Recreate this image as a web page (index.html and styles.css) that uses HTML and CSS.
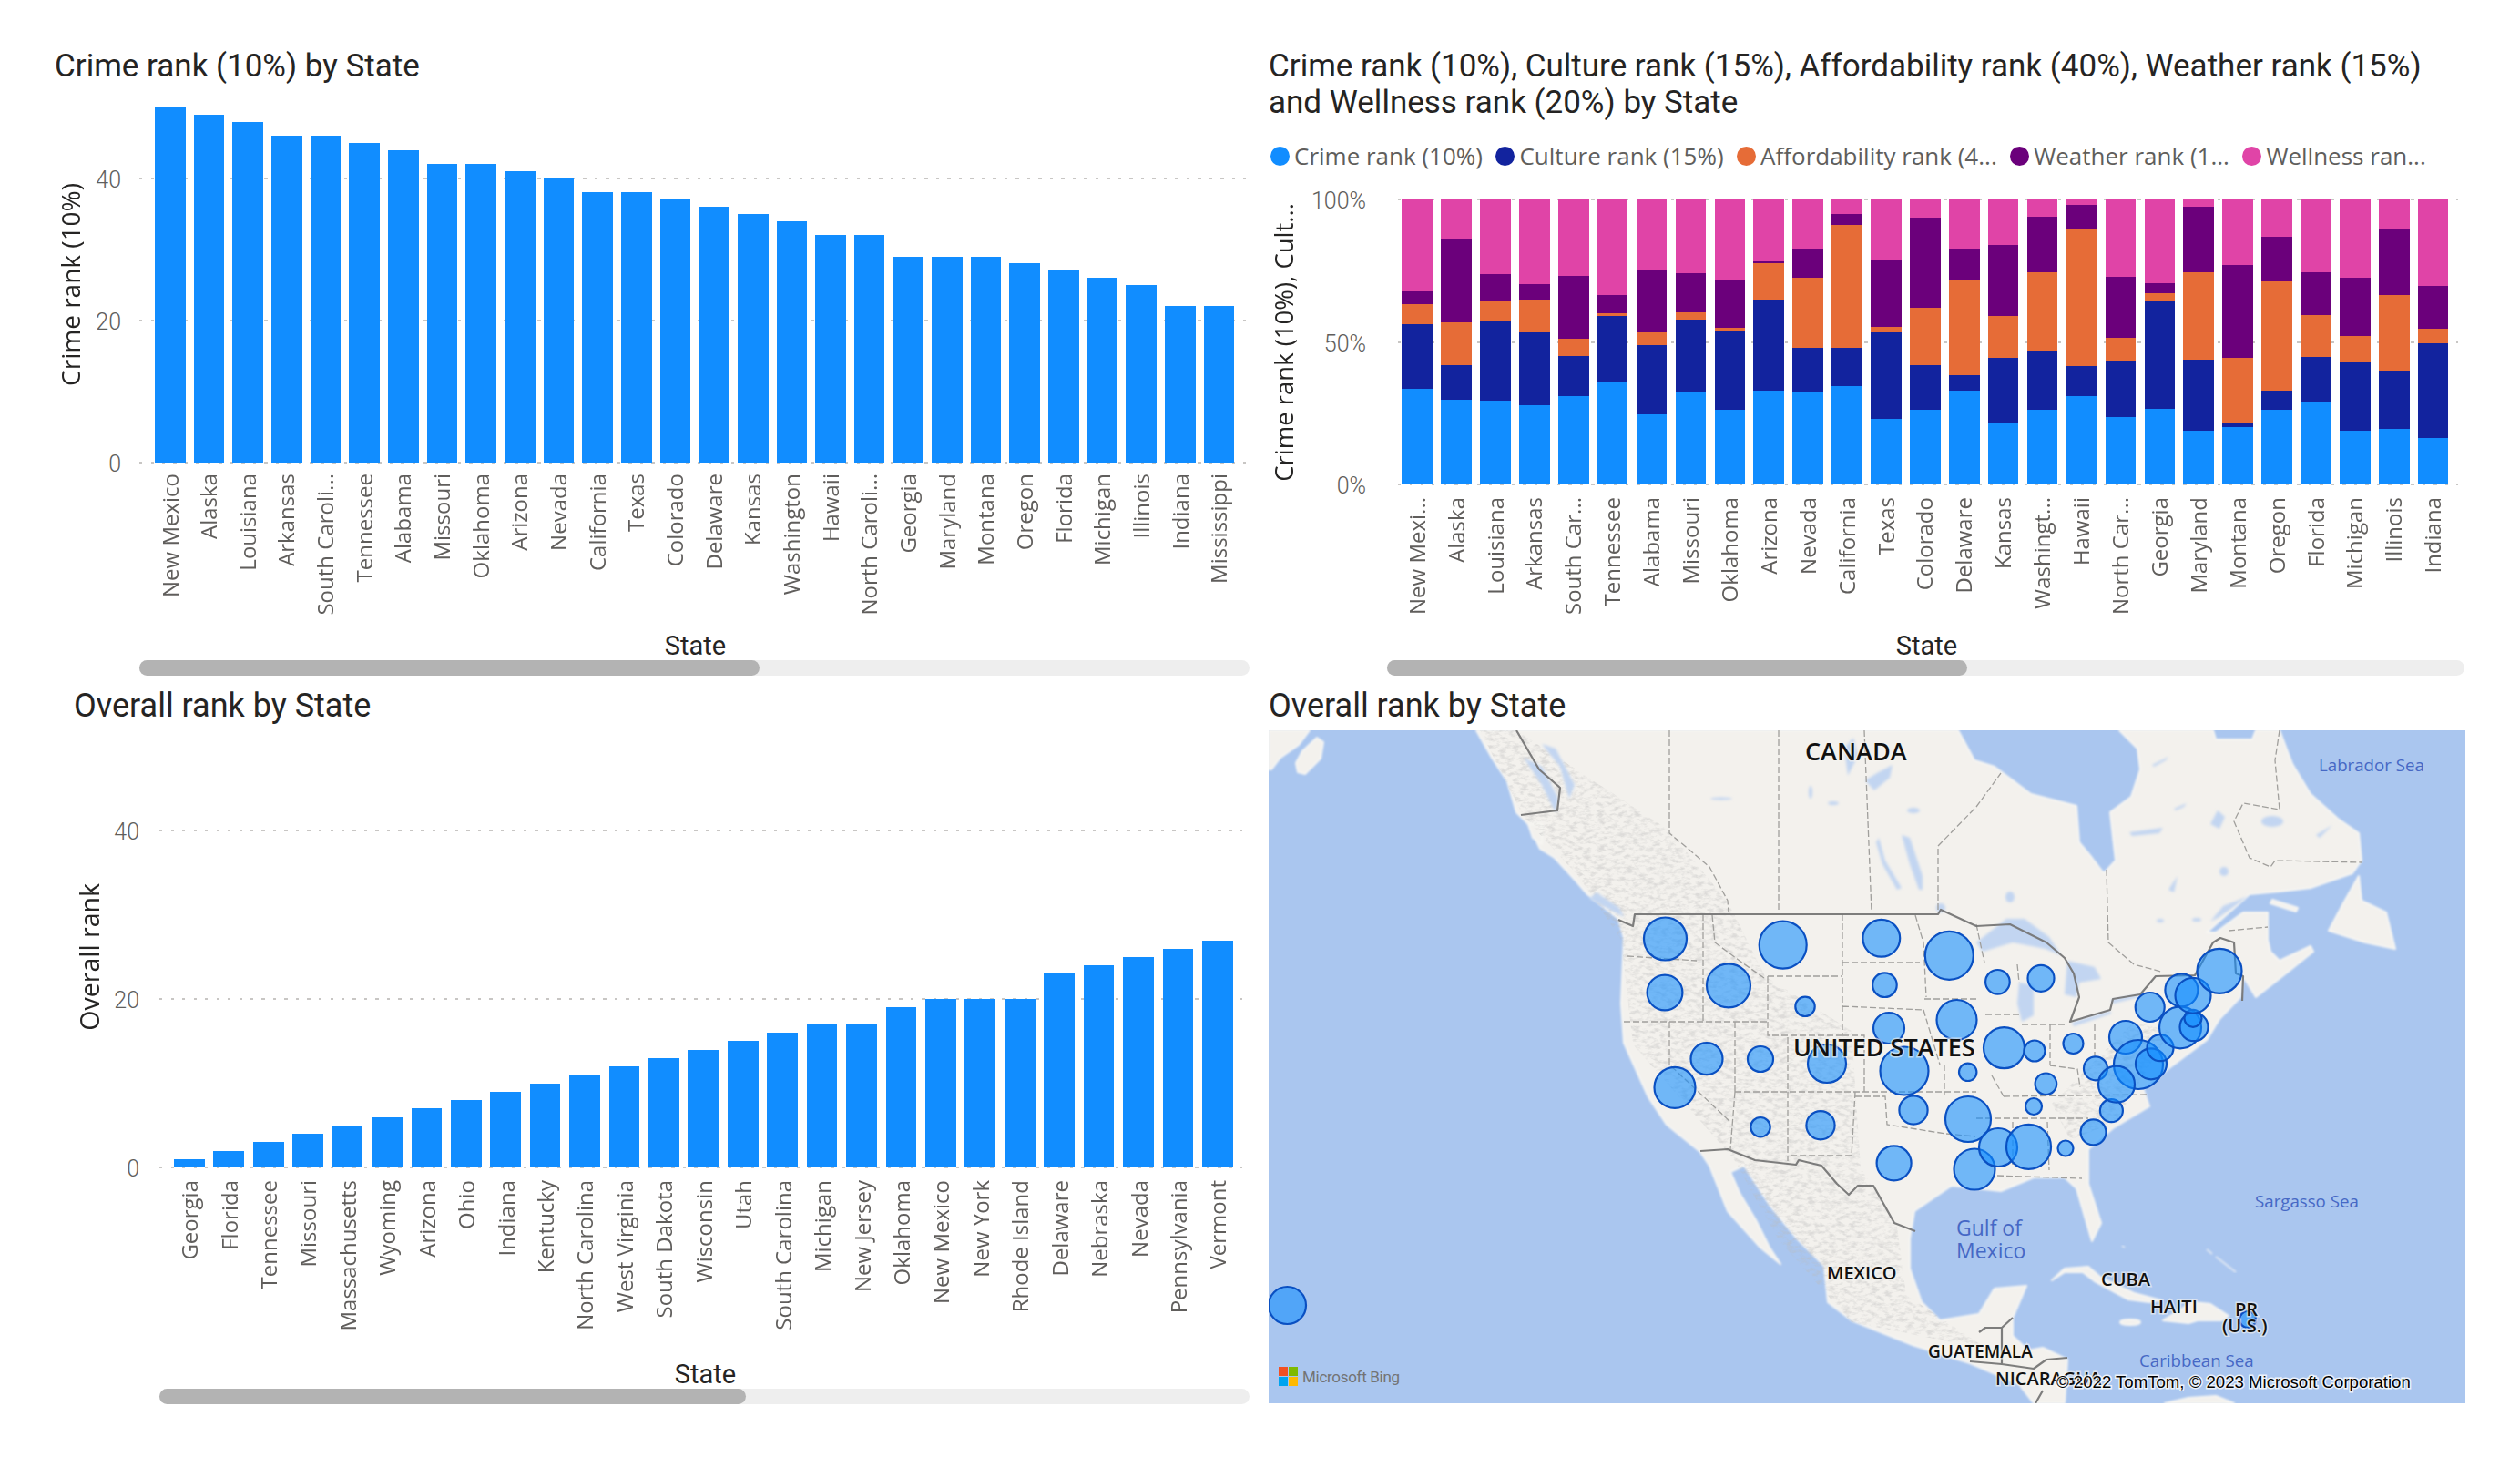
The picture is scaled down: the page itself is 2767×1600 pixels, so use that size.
FILE: index.html
```html
<!DOCTYPE html>
<html lang="en">
<head>
<meta charset="utf-8">
<title>Rank by State</title>
<link rel="stylesheet" href="styles.css">
</head>
<body>
<main class="report">

<section class="panel panel-crime">
  <h2 class="title">Crime rank (10%) by State</h2>
  <div class="plotrow">
    <div class="ytitle"><span>Crime rank (10%)</span></div>
    <div class="ticks"><span class="tick" style="bottom:80%">40</span><span class="tick" style="bottom:40%">20</span><span class="tick" style="bottom:0">0</span></div>
    <div class="plot">
      <i class="gridline" style="bottom:80%"></i><i class="gridline" style="bottom:40%"></i><i class="gridline" style="bottom:0"></i>
      <div class="bars">
        <b style="height:100%"></b><b style="height:98%"></b><b style="height:96%"></b><b style="height:92%"></b><b style="height:92%"></b><b style="height:90%"></b><b style="height:88%"></b><b style="height:84%"></b><b style="height:84%"></b><b style="height:82%"></b><b style="height:80%"></b><b style="height:76%"></b><b style="height:76%"></b><b style="height:74%"></b><b style="height:72%"></b><b style="height:70%"></b><b style="height:68%"></b><b style="height:64%"></b><b style="height:64%"></b><b style="height:58%"></b><b style="height:58%"></b><b style="height:58%"></b><b style="height:56%"></b><b style="height:54%"></b><b style="height:52%"></b><b style="height:50%"></b><b style="height:44%"></b><b style="height:44%"></b>
      </div>
    </div>
  </div>
  <div class="labels">
    <span>New Mexico</span><span>Alaska</span><span>Louisiana</span><span>Arkansas</span><span>South Caroli...</span><span>Tennessee</span><span>Alabama</span><span>Missouri</span><span>Oklahoma</span><span>Arizona</span><span>Nevada</span><span>California</span><span>Texas</span><span>Colorado</span><span>Delaware</span><span>Kansas</span><span>Washington</span><span>Hawaii</span><span>North Caroli...</span><span>Georgia</span><span>Maryland</span><span>Montana</span><span>Oregon</span><span>Florida</span><span>Michigan</span><span>Illinois</span><span>Indiana</span><span>Mississippi</span>
  </div>
  <div class="xtitle">State</div>
  <div class="scroll"><div class="thumb"></div></div>
</section>

<section class="panel panel-stack">
  <h2 class="title">Crime rank (10%), Culture rank (15%), Affordability rank (40%), Weather rank (15%)<br>and Wellness rank (20%) by State</h2>
  <ul class="legend">
    <li><i class="c1"></i>Crime rank (10%)</li>
    <li><i class="c2"></i>Culture rank (15%)</li>
    <li><i class="c3"></i>Affordability rank (4...</li>
    <li><i class="c4"></i>Weather rank (1...</li>
    <li><i class="c5"></i>Wellness ran...</li>
  </ul>
  <div class="plotrow">
    <div class="ytitle"><span>Crime rank (10%), Cult...</span></div>
    <div class="ticks"><span class="tick" style="bottom:100%">100%</span><span class="tick" style="bottom:50%">50%</span><span class="tick" style="bottom:0">0%</span></div>
    <div class="plot">
      <i class="gridline" style="bottom:100%"></i><i class="gridline" style="bottom:50%"></i><i class="gridline" style="bottom:0"></i>
      <div class="bars">
        <div class="stack"><i class="c1" style="flex:212"></i><i class="c2" style="flex:142"></i><i class="c3" style="flex:44"></i><i class="c4" style="flex:29"></i><i class="c5" style="flex:203"></i></div>
        <div class="stack"><i class="c1" style="flex:187"></i><i class="c2" style="flex:77"></i><i class="c3" style="flex:95"></i><i class="c4" style="flex:182"></i><i class="c5" style="flex:89"></i></div>
        <div class="stack"><i class="c1" style="flex:185"></i><i class="c2" style="flex:175"></i><i class="c3" style="flex:44"></i><i class="c4" style="flex:61"></i><i class="c5" style="flex:165"></i></div>
        <div class="stack"><i class="c1" style="flex:176"></i><i class="c2" style="flex:160"></i><i class="c3" style="flex:73"></i><i class="c4" style="flex:34"></i><i class="c5" style="flex:187"></i></div>
        <div class="stack"><i class="c1" style="flex:195"></i><i class="c2" style="flex:88"></i><i class="c3" style="flex:39"></i><i class="c4" style="flex:139"></i><i class="c5" style="flex:169"></i></div>
        <div class="stack"><i class="c1" style="flex:228"></i><i class="c2" style="flex:144"></i><i class="c3" style="flex:6"></i><i class="c4" style="flex:41"></i><i class="c5" style="flex:211"></i></div>
        <div class="stack"><i class="c1" style="flex:156"></i><i class="c2" style="flex:152"></i><i class="c3" style="flex:28"></i><i class="c4" style="flex:138"></i><i class="c5" style="flex:156"></i></div>
        <div class="stack"><i class="c1" style="flex:204"></i><i class="c2" style="flex:161"></i><i class="c3" style="flex:15"></i><i class="c4" style="flex:87"></i><i class="c5" style="flex:163"></i></div>
        <div class="stack"><i class="c1" style="flex:165"></i><i class="c2" style="flex:173"></i><i class="c3" style="flex:9"></i><i class="c4" style="flex:106"></i><i class="c5" style="flex:177"></i></div>
        <div class="stack"><i class="c1" style="flex:208"></i><i class="c2" style="flex:201"></i><i class="c3" style="flex:80"></i><i class="c4" style="flex:4"></i><i class="c5" style="flex:137"></i></div>
        <div class="stack"><i class="c1" style="flex:206"></i><i class="c2" style="flex:96"></i><i class="c3" style="flex:154"></i><i class="c4" style="flex:66"></i><i class="c5" style="flex:108"></i></div>
        <div class="stack"><i class="c1" style="flex:217"></i><i class="c2" style="flex:84"></i><i class="c3" style="flex:272"></i><i class="c4" style="flex:24"></i><i class="c5" style="flex:33"></i></div>
        <div class="stack"><i class="c1" style="flex:145"></i><i class="c2" style="flex:191"></i><i class="c3" style="flex:12"></i><i class="c4" style="flex:148"></i><i class="c5" style="flex:134"></i></div>
        <div class="stack"><i class="c1" style="flex:165"></i><i class="c2" style="flex:99"></i><i class="c3" style="flex:126"></i><i class="c4" style="flex:200"></i><i class="c5" style="flex:40"></i></div>
        <div class="stack"><i class="c1" style="flex:208"></i><i class="c2" style="flex:33"></i><i class="c3" style="flex:212"></i><i class="c4" style="flex:68"></i><i class="c5" style="flex:109"></i></div>
        <div class="stack"><i class="c1" style="flex:135"></i><i class="c2" style="flex:145"></i><i class="c3" style="flex:93"></i><i class="c4" style="flex:156"></i><i class="c5" style="flex:101"></i></div>
        <div class="stack"><i class="c1" style="flex:165"></i><i class="c2" style="flex:131"></i><i class="c3" style="flex:174"></i><i class="c4" style="flex:122"></i><i class="c5" style="flex:38"></i></div>
        <div class="stack"><i class="c1" style="flex:195"></i><i class="c2" style="flex:66"></i><i class="c3" style="flex:302"></i><i class="c4" style="flex:55"></i><i class="c5" style="flex:12"></i></div>
        <div class="stack"><i class="c1" style="flex:149"></i><i class="c2" style="flex:124"></i><i class="c3" style="flex:52"></i><i class="c4" style="flex:134"></i><i class="c5" style="flex:171"></i></div>
        <div class="stack"><i class="c1" style="flex:168"></i><i class="c2" style="flex:237"></i><i class="c3" style="flex:17"></i><i class="c4" style="flex:23"></i><i class="c5" style="flex:185"></i></div>
        <div class="stack"><i class="c1" style="flex:118"></i><i class="c2" style="flex:158"></i><i class="c3" style="flex:192"></i><i class="c4" style="flex:146"></i><i class="c5" style="flex:16"></i></div>
        <div class="stack"><i class="c1" style="flex:127"></i><i class="c2" style="flex:8"></i><i class="c3" style="flex:145"></i><i class="c4" style="flex:205"></i><i class="c5" style="flex:145"></i></div>
        <div class="stack"><i class="c1" style="flex:165"></i><i class="c2" style="flex:42"></i><i class="c3" style="flex:241"></i><i class="c4" style="flex:99"></i><i class="c5" style="flex:83"></i></div>
        <div class="stack"><i class="c1" style="flex:181"></i><i class="c2" style="flex:101"></i><i class="c3" style="flex:93"></i><i class="c4" style="flex:94"></i><i class="c5" style="flex:161"></i></div>
        <div class="stack"><i class="c1" style="flex:118"></i><i class="c2" style="flex:152"></i><i class="c3" style="flex:59"></i><i class="c4" style="flex:128"></i><i class="c5" style="flex:173"></i></div>
        <div class="stack"><i class="c1" style="flex:123"></i><i class="c2" style="flex:128"></i><i class="c3" style="flex:168"></i><i class="c4" style="flex:146"></i><i class="c5" style="flex:65"></i></div>
        <div class="stack"><i class="c1" style="flex:103"></i><i class="c2" style="flex:210"></i><i class="c3" style="flex:32"></i><i class="c4" style="flex:94"></i><i class="c5" style="flex:191"></i></div>
      </div>
    </div>
  </div>
  <div class="labels">
    <span>New Mexi...</span><span>Alaska</span><span>Louisiana</span><span>Arkansas</span><span>South Car...</span><span>Tennessee</span><span>Alabama</span><span>Missouri</span><span>Oklahoma</span><span>Arizona</span><span>Nevada</span><span>California</span><span>Texas</span><span>Colorado</span><span>Delaware</span><span>Kansas</span><span>Washingt...</span><span>Hawaii</span><span>North Car...</span><span>Georgia</span><span>Maryland</span><span>Montana</span><span>Oregon</span><span>Florida</span><span>Michigan</span><span>Illinois</span><span>Indiana</span>
  </div>
  <div class="xtitle">State</div>
  <div class="scroll"><div class="thumb"></div></div>
</section>

<section class="panel panel-overall">
  <h2 class="title">Overall rank by State</h2>
  <div class="plotrow">
    <div class="ytitle"><span>Overall rank</span></div>
    <div class="ticks"><span class="tick" style="bottom:80%">40</span><span class="tick" style="bottom:40%">20</span><span class="tick" style="bottom:0">0</span></div>
    <div class="plot">
      <i class="gridline" style="bottom:80%"></i><i class="gridline" style="bottom:40%"></i><i class="gridline" style="bottom:0"></i>
      <div class="bars">
        <b style="height:2%"></b><b style="height:4%"></b><b style="height:6%"></b><b style="height:8%"></b><b style="height:10%"></b><b style="height:12%"></b><b style="height:14%"></b><b style="height:16%"></b><b style="height:18%"></b><b style="height:20%"></b><b style="height:22%"></b><b style="height:24%"></b><b style="height:26%"></b><b style="height:28%"></b><b style="height:30%"></b><b style="height:32%"></b><b style="height:34%"></b><b style="height:34%"></b><b style="height:38%"></b><b style="height:40%"></b><b style="height:40%"></b><b style="height:40%"></b><b style="height:46%"></b><b style="height:48%"></b><b style="height:50%"></b><b style="height:52%"></b><b style="height:54%"></b>
      </div>
    </div>
  </div>
  <div class="labels">
    <span>Georgia</span><span>Florida</span><span>Tennessee</span><span>Missouri</span><span>Massachusetts</span><span>Wyoming</span><span>Arizona</span><span>Ohio</span><span>Indiana</span><span>Kentucky</span><span>North Carolina</span><span>West Virginia</span><span>South Dakota</span><span>Wisconsin</span><span>Utah</span><span>South Carolina</span><span>Michigan</span><span>New Jersey</span><span>Oklahoma</span><span>New Mexico</span><span>New York</span><span>Rhode Island</span><span>Delaware</span><span>Nebraska</span><span>Nevada</span><span>Pennsylvania</span><span>Vermont</span>
  </div>
  <div class="xtitle">State</div>
  <div class="scroll"><div class="thumb"></div></div>
</section>

<section class="panel panel-map">
  <h2 class="title">Overall rank by State</h2>
  <svg class="map" viewBox="0 0 1314 739" width="1314" height="739" role="img" aria-label="Bubble map of overall rank by state">
    <defs>
      <filter id="soft" x="-2%" y="-2%" width="104%" height="104%"><feGaussianBlur stdDeviation="0.9"/></filter>
      <filter id="softer" x="-20%" y="-20%" width="140%" height="140%"><feGaussianBlur stdDeviation="1.6"/></filter>
      <filter id="terrain" x="0" y="0" width="100%" height="100%">
        <feTurbulence type="fractalNoise" baseFrequency=".13 .24" numOctaves="3" seed="7"/>
        <feColorMatrix type="matrix" values="0 0 0 0 .5  0 0 0 0 .5  0 0 0 0 .5  3 0 0 0 -1.3"/>
      </filter>
      <clipPath id="rugged">
        <path d="M232 0L272 0L440 110L505 190L545 270L640 330L650 480L690 545L700 620L790 680L640 650L560 560L510 470L400 345L387 230L340 160L280 95Z"/>
        <path d="M860 410L950 320L990 330L930 430L880 450Z"/>
      </clipPath>
    </defs>

    <rect class="water" width="1314" height="739"/>

    <g class="land" filter="url(#soft)">
      <path d="M228 0L245 30L262 56L272 90L285 103L298 130L314 140L337 165L350 180L384 207L390 228L389 250L387 300L390 343L417 403L437 433L474 463L484 478L504 528L540 568L562 586L550 568L535 538L517 508L507 485L522 478L550 521L580 558L610 588L614 628L640 648L707 675L770 695L824 718L840 739L874 739L877 691L850 678L834 681L817 665L817 645L832 610L797 613L780 641L737 648L717 628L704 591L704 558L709 528L750 500L804 506L840 491L874 491L887 503L904 561L914 541L900 498L900 460L927 437L967 413L960 393L990 370L1030 340L1044 317L1067 293L1070 270L1084 293L1117 267L1147 243L1144 237L1110 253L1100 243L1097 230L1097 200L1070 200L1040 222L1030 222L1077 180L1110 177L1144 173L1190 157L1200 143L1197 113L1174 97L1144 70L1124 37L1110 0L1084 0L1080 10L1040 10L1037 0L934 0L954 20L957 43L947 73L924 90L927 117L930 143L917 157L904 140L890 123L887 83L837 70L797 40L775 33L757 0Z"/>
      <path d="M0 0L45 0L33 16L13 30L3 43L0 43Z"/>
      <path d="M30 36L37 23L53 8L60 13L57 31L40 48L32 46Z"/>
      <path d="M285 103L300 103L300 125L290 118Z"/>
      <path d="M1197 160L1180 190L1164 220L1204 233L1237 240L1227 200L1200 187Z"/>
      <path d="M1102 186L1130 195L1128 199L1100 190Z"/>
      <path d="M860 604L874 591L900 589L914 601L950 618L980 626L967 628L944 625L907 605L894 595L874 595Z"/>
      <path d="M1014 628L1034 630L1054 643L1047 648L1020 648L1010 651L982 648Z"/>
      <ellipse cx="946" cy="650" rx="11" ry="3"/>
      <path d="M984 739L1010 733L1040 731L1060 739Z"/>
    </g>

    <g class="land-faint" filter="url(#soft)">
      <path d="M1040 578L1062 595"/><path d="M1030 570L1036 575"/><path d="M937 566L940 568"/>
    </g>

    <g clip-path="url(#rugged)"><rect class="terrain" width="1314" height="739" filter="url(#terrain)"/></g>

    <g class="lakes" filter="url(#softer)">
      <path d="M777 233L810 207L830 207L857 227L870 247L853 240L817 233L784 243Z"/>
      <path d="M824 277L840 280L840 313L827 320L822 300Z"/>
      <path d="M877 253L907 260L914 273L890 277L887 293L874 290Z"/>
      <path d="M925 296L955 290L955 293L927 300Z"/>
      <path d="M882 321L924 308L925 311L884 325Z"/>
      <path d="M695 115L704 118L718 160L718 175L714 175L704 147Z"/>
      <path d="M670 118L677 143L695 173L690 175L674 147L667 123Z"/>
      <path d="M655 55L668 47L685 38L682 52L665 66Z"/>
      <path d="M632 20L642 8L647 28L636 50Z"/>
      <ellipse cx="620" cy="80" rx="6" ry="2"/>
      <ellipse cx="497" cy="75" rx="12" ry="1.5"/>
      <ellipse cx="595" cy="68" rx="2" ry="7"/>
      <ellipse cx="708" cy="88" rx="7" ry="3"/>
      <ellipse cx="738" cy="195" rx="5" ry="5"/>
      <path d="M1042 88L1050 95L1044 108L1034 103Z"/>
      <ellipse cx="1102" cy="100" rx="12" ry="6"/>
      <path d="M945 112L982 107L978 113L948 116Z"/>
      <ellipse cx="1049" cy="155" rx="5" ry="5"/>
      <ellipse cx="814" cy="183" rx="5" ry="6"/>
      <path d="M988 175L998 160L994 178Z"/>
      <path d="M970 38L988 29L985 33L972 40Z"/>
      <path d="M994 86L1008 80L1005 84L996 88Z"/>
      <path d="M1150 115L1168 104L1154 118Z"/>
      <path d="M1034 210L1048 193L1076 182L1044 205Z"/>
      <ellipse cx="1019" cy="208" rx="5" ry="2"/>
      <ellipse cx="979" cy="209" rx="4" ry="2"/>
      <path d="M300 15L320 40L330 75L336 60L315 20Z"/>
      <path d="M280 30L300 60L315 90L318 75L300 40Z"/>
      <path d="M352 185L390 205L385 195L360 178Z"/>
    </g>

    <path class="dash" d="M440 0V113L457 127L484 150L504 187L505 200M560 0V197M654 0L662 200M735 197V127L777 84L804 47M920 153L922 233L950 257L980 265M1110 0L1105 33L1110 87L1070 80L1060 100L1077 140L1100 150L1105 143L1200 145M1054 220L1097 216M477 202V320M487 203L490 233L517 253L544 272M548 270H630M548 270V335H630M630 202V335M630 255H715M630 303L720 307M630 335H654V397M394 248L470 253M390 320H547M512 320V397M440 320V367L507 430M512 397H777M570 337V473M512 397L507 460M644 397L640 467H570M644 402H677L679 433L744 443M742 367V400M720 295H777M710 203L719 233L722 293M719 307L737 367M787 312H824M827 323H877M858 323V367M907 323V358M807 402L964 400M777 426H900M794 379L807 402M858 368L888 372L891 392M800 489L893 492M855 430L857 483M817 430V477M777 213L786 255M822 257L824 277M744 443L776 446"/>

    <path class="border" d="M272 0L297 43L320 63L317 88L277 93M384 208L400 215L402 202H735L738 197L777 215L814 213L854 233L874 250L884 267L890 293L880 320L924 307L927 295L957 290L974 270L1017 269L1037 233L1045 228L1060 233L1062 267L1070 270L1069 297M474 462L504 460L534 472L579 477L582 472L607 478L624 498L637 510L647 500L664 500L687 541L710 550M780 661L787 656L805 656V678M805 656L817 645M770 693L805 696L840 701L854 691L877 689M805 678V696M842 739L850 725"/>

    <g class="bubbles">
      <circle cx="435.5" cy="229" r="23.5"/><circle cx="564.7" cy="235.7" r="26"/><circle cx="672.8" cy="228.3" r="20.4"/><circle cx="747.3" cy="247.3" r="26.5"/><circle cx="435" cy="288" r="19.4"/><circle cx="505" cy="280.3" r="24"/><circle cx="589" cy="303.3" r="10.7"/><circle cx="676.4" cy="279.7" r="13.3"/><circle cx="800.4" cy="276.3" r="13.3"/><circle cx="848" cy="272.3" r="14.5"/><circle cx="681" cy="327" r="17"/><circle cx="755.5" cy="318" r="22"/><circle cx="481" cy="360.7" r="17.5"/><circle cx="540" cy="361" r="14"/><circle cx="613" cy="366" r="21"/><circle cx="698" cy="374" r="26.5"/><circle cx="807.5" cy="348.7" r="22.5"/><circle cx="841" cy="352" r="11.5"/><circle cx="883.5" cy="344" r="11"/><circle cx="941" cy="337" r="18"/><circle cx="446" cy="392.3" r="22.5"/><circle cx="853.4" cy="388.3" r="11.8"/><circle cx="767.7" cy="375.3" r="9.7"/><circle cx="540" cy="435.7" r="10.7"/><circle cx="606" cy="433.7" r="15.6"/><circle cx="708" cy="417" r="15.6"/><circle cx="768" cy="427" r="25"/><circle cx="686.6" cy="475.3" r="19"/><circle cx="775" cy="482" r="22.5"/><circle cx="801" cy="458" r="21"/><circle cx="834.5" cy="457.3" r="24.5"/><circle cx="875" cy="459" r="8.5"/><circle cx="905.5" cy="441.3" r="14"/><circle cx="925.4" cy="417.7" r="12.5"/><circle cx="840" cy="413" r="9"/><circle cx="908" cy="371.3" r="13"/><circle cx="955" cy="367" r="27"/><circle cx="931" cy="388.7" r="20"/><circle cx="969" cy="366.3" r="17"/><circle cx="979" cy="348.7" r="14.5"/><circle cx="967.7" cy="304" r="16"/><circle cx="1001" cy="326.3" r="23"/><circle cx="1016" cy="325.7" r="15.5"/><circle cx="1015" cy="316.3" r="9.5"/><circle cx="1002.4" cy="285.3" r="18"/><circle cx="1015" cy="291.3" r="19.5"/><circle cx="1044" cy="264.3" r="24.5"/><circle cx="20.5" cy="631.5" r="20.5"/><circle cx="1075" cy="647" r="9"/>
    </g>

    <g class="place">
      <text class="big" x="589" y="33">CANADA</text>
      <text class="big" x="576" y="358">UNITED STATES</text>
      <text class="mid" x="613" y="603">MEXICO</text>
      <text class="mid guat" x="724" y="689">GUATEMALA</text>
      <text class="mid" x="798" y="719">NICARAGUA</text>
      <text class="mid" x="914" y="610">CUBA</text>
      <text class="mid" x="968" y="640">HAITI</text>
      <text class="mid" x="1061" y="643">PR</text>
      <text class="mid" x="1047" y="661">(U.S.)</text>
    </g>
    <g class="sea">
      <text x="1153" y="45">Labrador Sea</text>
      <text x="1083" y="524">Sargasso Sea</text>
      <text class="gulf" x="755" y="555">Gulf of</text>
      <text class="gulf" x="755" y="580">Mexico</text>
      <text x="956" y="699">Caribbean Sea</text>
    </g>

    <g class="bing-logo">
      <rect class="ms-r" x="11" y="699" width="10" height="10"/><rect class="ms-g" x="22" y="699" width="10" height="10"/><rect class="ms-b" x="11" y="710" width="10" height="10"/><rect class="ms-y" x="22" y="710" width="10" height="10"/>
    </g>
    <text class="bing" x="37" y="716">Microsoft Bing</text>
    <text class="credit" x="865" y="722">© 2022 TomTom, © 2023 Microsoft Corporation</text>
  </svg>
</section>

</main>
</body>
</html>
```
FILE: styles.css
```css
* { box-sizing: border-box; }
html, body { margin: 0; padding: 0; background: #fff; }
body { font-family: "Open Sans", "Liberation Sans", sans-serif; width: 2767px; height: 1600px; overflow: hidden; }

.report {
  display: grid;
  grid-template-columns: 1380px 1387px;
  grid-template-rows: 750px 850px;
}

.panel { padding-left: var(--px); padding-top: var(--pt); min-width: 0; }

.panel-crime {
  --px: 60px; --pt: 53px; --ytitle-size: 28px;
  --plot-off: 93px; --tick-w: 39px; --plot-gap: 20px;
  --plot-h: 389.5px; --plot-top: 25px; --plot-w: 1215px; --grid-left: 0px;
  --bar-w: 33.66px; --bar-gap: 9px; --bars-left: 17px; --labels-left: 12.5px; --pitch: 42.66px;
  --labels-top: 12px; --labels-h: 172px;
  --scroll-w: 1219px; --thumb-w: 681px;
}
.panel-stack {
  --px: 13px; --pt: 53px; --ytitle-size: 27.5px;
  --plot-off: 130px; --tick-w: 73px; --plot-gap: 23px;
  --plot-h: 313px; --plot-top: 33px; --plot-w: 1176px; --grid-left: 12px;
  --bar-w: 33.6px; --bar-gap: 9.32px; --bars-left: 16.3px; --labels-left: 11.7px; --pitch: 42.92px;
  --labels-top: 14px; --labels-h: 146px;
  --scroll-w: 1183px; --thumb-w: 637px;
}
.panel-overall {
  --px: 81px; --pt: 5px; --ytitle-size: 28.5px; --title-size: 36px;
  --plot-off: 94px; --tick-w: 38px; --plot-gap: 22px;
  --plot-h: 462px; --plot-top: 25px; --plot-w: 1189px; --grid-left: 0px;
  --bar-w: 33.7px; --bar-gap: 9.74px; --bars-left: 16px; --labels-left: 11.1px; --pitch: 43.44px;
  --labels-top: 14px; --labels-h: 196px;
  --scroll-w: 1197px; --thumb-w: 644px;
}
.panel-map { --px: 13px; --pt: 5px; --title-size: 36px; }

.title {
  margin: 0;
  font: 400 var(--title-size, 35px)/40px Roboto, "Liberation Sans", sans-serif;
  color: #252423;
  white-space: nowrap;
}

.legend {
  display: flex;
  gap: 14.5px;
  list-style: none;
  margin: 23px 0 0;
  padding: 0 0 0 2px;
  height: 30px;
  font-size: 26px;
  line-height: 30px;
  color: #605e5c;
  white-space: nowrap;
}
.legend li { display: flex; align-items: center; gap: 5px; }
.legend i { width: 21px; height: 21px; border-radius: 50%; flex: none; }

.c1 { background: #118dff; }
.c2 { background: #12239e; }
.c3 { background: #e66c37; }
.c4 { background: #6b007b; }
.c5 { background: #e044a7; }

.plotrow { display: flex; height: var(--plot-h); margin-top: var(--plot-top); }

.ytitle { flex: none; width: 34px; display: flex; align-items: center; justify-content: center; }
.ytitle span {
  writing-mode: vertical-rl;
  transform: rotate(180deg);
  font-size: var(--ytitle-size);
  line-height: 34px;
  color: #252423;
  white-space: nowrap;
}

.ticks { position: relative; flex: none; width: var(--tick-w); }
.tick {
  position: absolute;
  right: 0;
  transform: translateY(calc(50% + 1.5px));
  font: 300 25px/28px Roboto, "Liberation Sans", sans-serif;
  color: #605e5c;
}

.plot { position: relative; flex: none; width: var(--plot-w); margin-left: var(--plot-gap); height: 100%; }
.gridline {
  position: absolute;
  left: var(--grid-left);
  right: 0;
  height: 2px;
  margin-bottom: -1px;
  background: repeating-linear-gradient(90deg, #c8c6c4 0 3px, transparent 3px 12.5px);
}
.bars {
  position: relative;
  display: flex;
  align-items: flex-end;
  gap: var(--bar-gap);
  height: 100%;
  padding-left: var(--bars-left);
}
.bars b { display: block; flex: none; width: var(--bar-w); background: #118dff; }
.stack { display: flex; flex-direction: column-reverse; flex: none; width: var(--bar-w); height: 100%; }
.stack i { display: block; min-height: 0; }

.labels {
  display: flex;
  align-items: flex-start;
  height: var(--labels-h);
  margin: var(--labels-top) 0 0 var(--plot-off);
  padding-left: var(--labels-left);
}
.labels span {
  flex: none;
  width: var(--pitch);
  writing-mode: vertical-rl;
  transform: rotate(180deg);
  font-size: 24px;
  line-height: var(--pitch);
  color: #605e5c;
  white-space: nowrap;
}

.xtitle {
  height: 33px;
  margin-left: var(--plot-off);
  width: calc(var(--scroll-w) + 2px);
  text-align: center;
  font: 400 29px/34px Roboto, "Liberation Sans", sans-serif;
  color: #252423;
}

.scroll {
  width: var(--scroll-w);
  height: 17px;
  margin-left: var(--plot-off);
  border-radius: 9px;
  background: #eeeeee;
}
.thumb { width: var(--thumb-w); height: 100%; border-radius: 9px; background: #b3b3b3; }

/* map */
.map { display: block; margin-top: 7px; overflow: hidden; }
.water { fill: #aac6ef; }
.land path, .land ellipse { fill: #f3f1ed; stroke: #f7f6f3; stroke-width: 2; stroke-linejoin: round; }
.land-faint path { fill: none; stroke: #dfe7f3; stroke-width: 2; }
.terrain { opacity: .4; }
.lakes path, .lakes ellipse { fill: #c2d5f1; }
.dash { fill: none; stroke: #a09f9c; stroke-width: 1.3; stroke-dasharray: 7 3; }
.border { fill: none; stroke: #767676; stroke-width: 2.2; stroke-linejoin: round; opacity: .95; }
.bubbles circle { fill: #118dff; fill-opacity: .58; stroke: #0a50c2; stroke-width: 2.2; }

.place text {
  font-family: "Open Sans", "Liberation Sans", sans-serif;
  font-weight: 600;
  fill: #111;
  paint-order: stroke;
  stroke: rgba(245, 244, 240, .6);
  stroke-width: 3px;
}
.place .big { font-size: 27px; font-weight: 600; }
.place .mid { font-size: 20px; }
.place .guat { font-size: 19px; }
.sea text {
  font-family: "Open Sans", "Liberation Sans", sans-serif;
  font-size: 18.7px;
  fill: #4668c5;
}
.sea .gulf { font-size: 23px; }
.ms-r { fill: #f25022; }
.ms-g { fill: #7fba00; }
.ms-b { fill: #00a4ef; }
.ms-y { fill: #ffb900; }
.bing { font: 400 17px Roboto, sans-serif; letter-spacing: -.3px; fill: #737373; }
.credit {
  font: 400 18.6px "Liberation Sans", Arial, sans-serif;
  fill: #000;
  paint-order: stroke;
  stroke: rgba(255, 255, 255, .8);
  stroke-width: 3px;
}
```
